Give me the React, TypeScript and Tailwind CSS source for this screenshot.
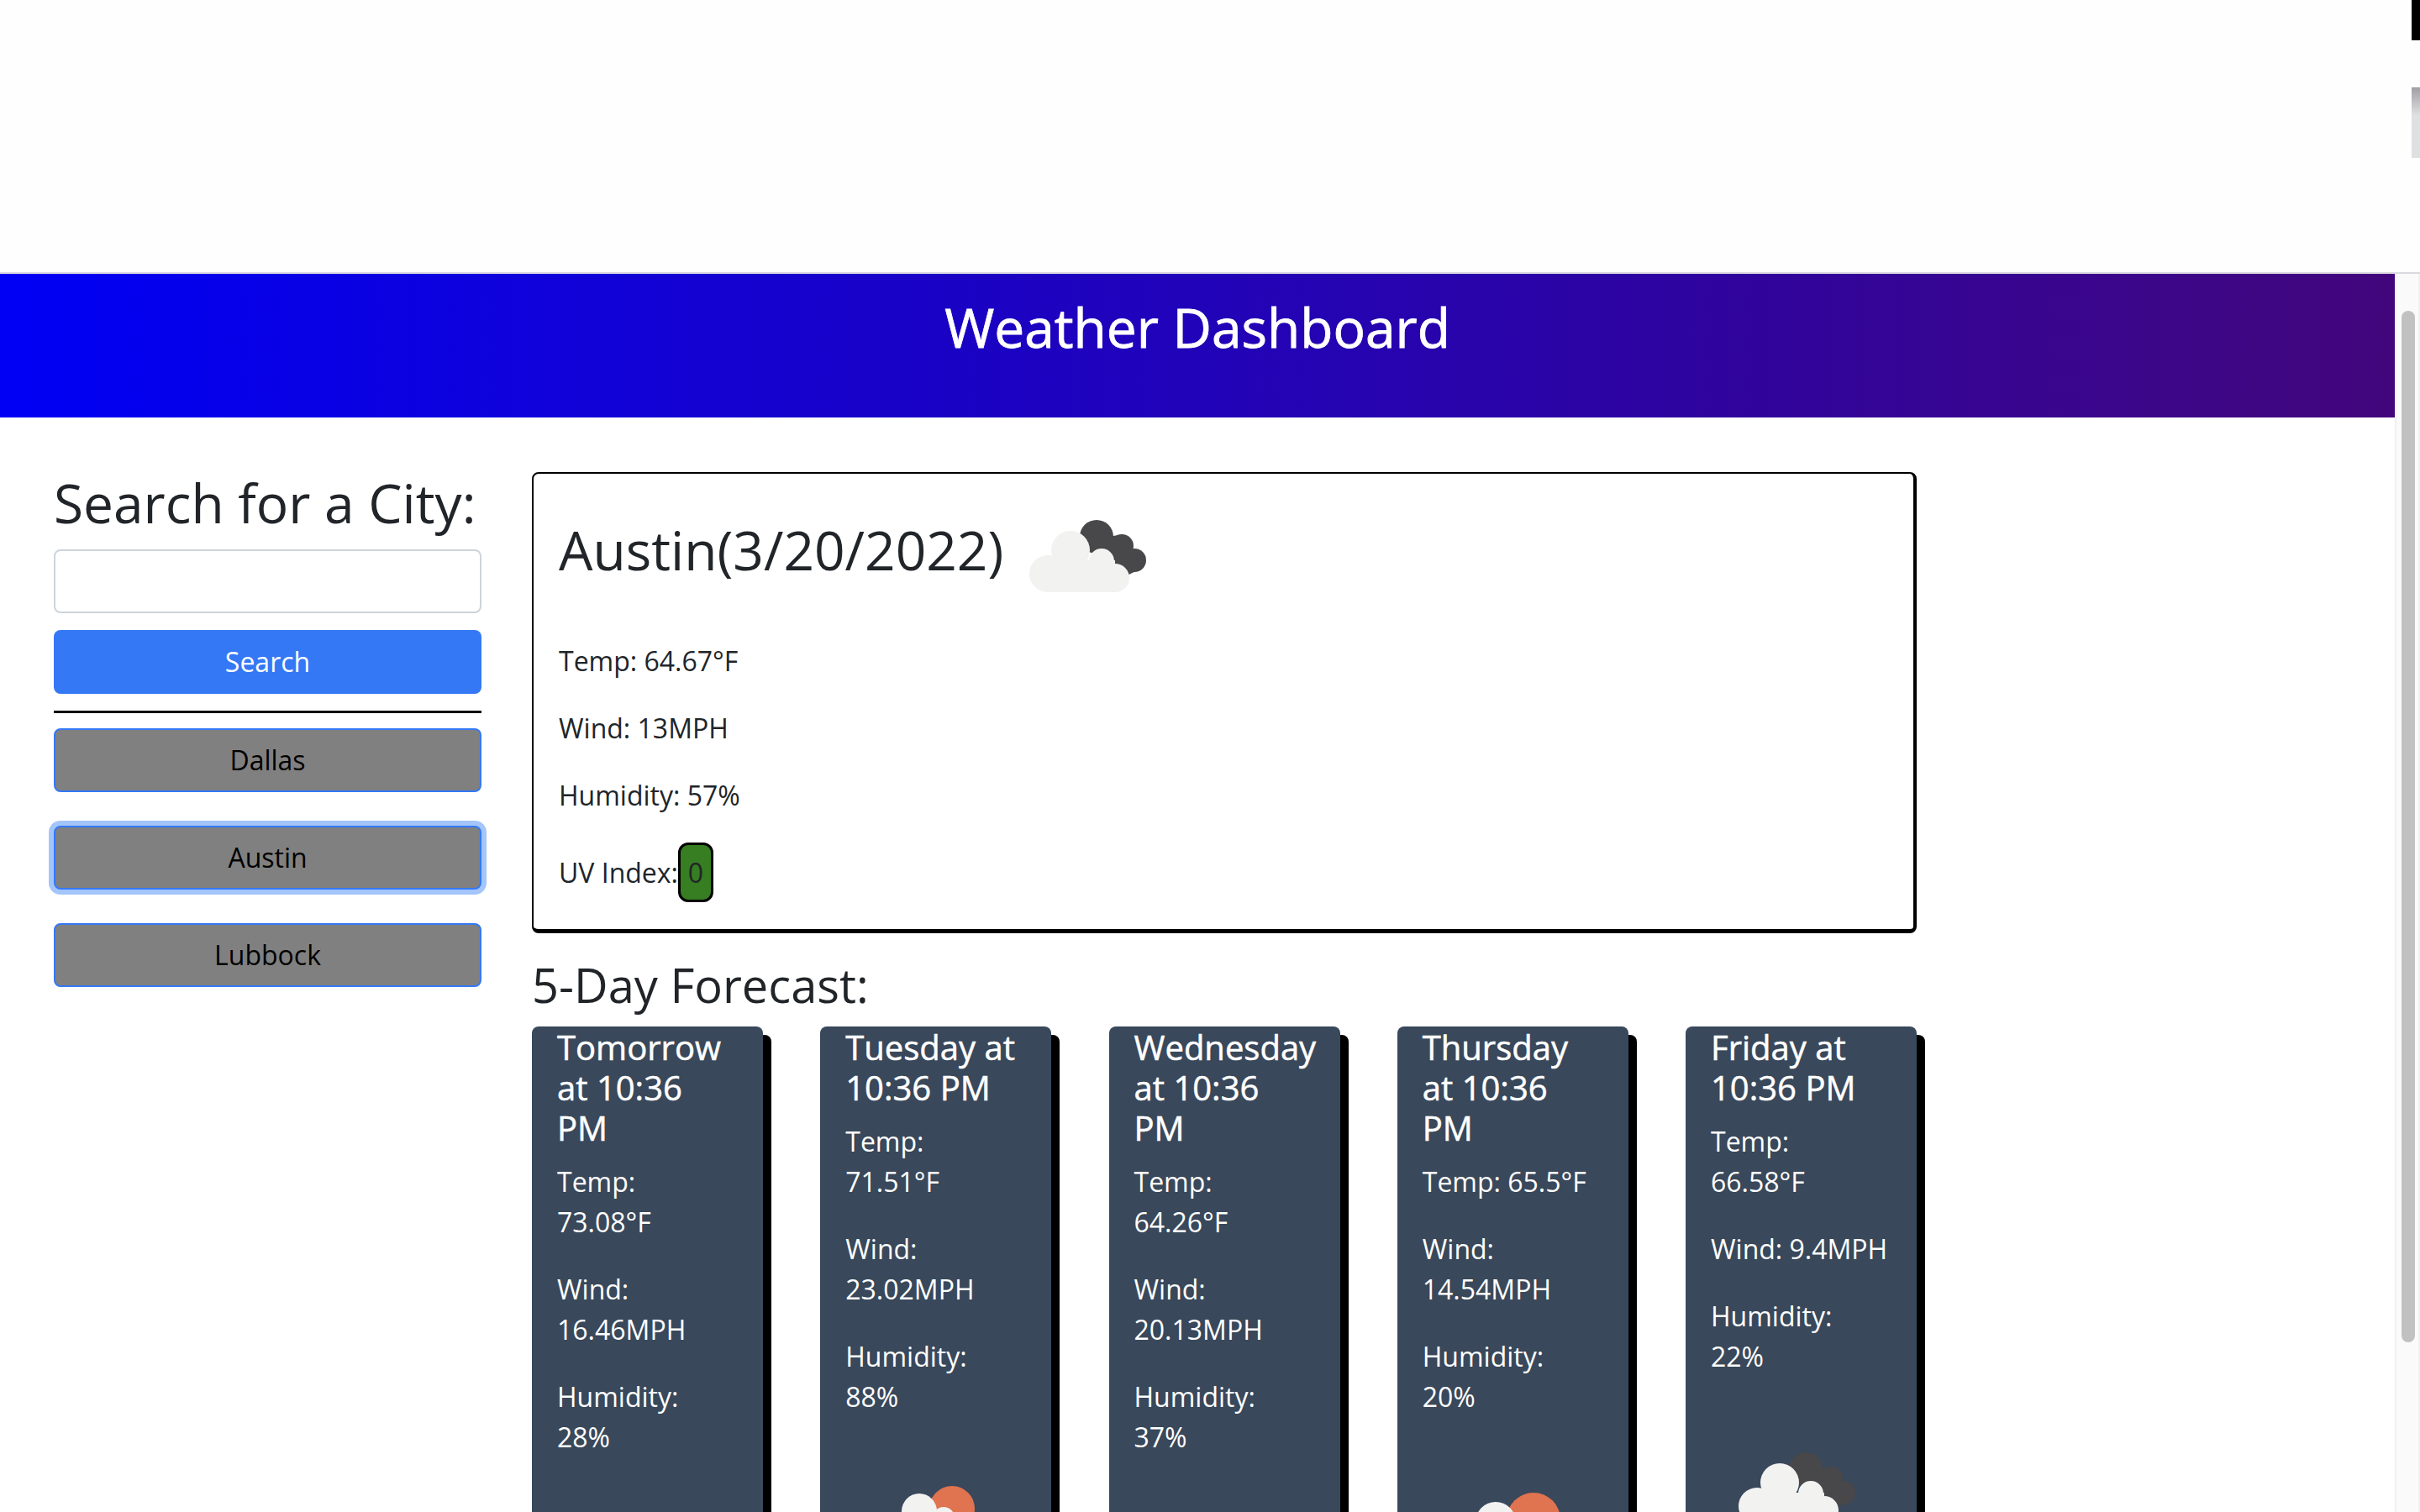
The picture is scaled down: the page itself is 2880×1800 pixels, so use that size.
import React from 'react';

const SANS = { fontFamily: '"Open Sans", "Noto Sans", sans-serif' };

type Icon = 'clouds' | 'sun' | 'sunwide';

type Day = {
  title: string;
  temp: string;
  wind: string;
  humidity: string;
  icon: Icon;
};

const days: Day[] = [
  { title: 'Tomorrow at 10:36 PM', temp: '73.08°F', wind: '16.46MPH', humidity: '28%', icon: 'sun' },
  { title: 'Tuesday at 10:36 PM', temp: '71.51°F', wind: '23.02MPH', humidity: '88%', icon: 'sun' },
  { title: 'Wednesday at 10:36 PM', temp: '64.26°F', wind: '20.13MPH', humidity: '37%', icon: 'sun' },
  { title: 'Thursday at 10:36 PM', temp: '65.5°F', wind: '14.54MPH', humidity: '20%', icon: 'sunwide' },
  { title: 'Friday at 10:36 PM', temp: '66.58°F', wind: '9.4MPH', humidity: '22%', icon: 'clouds' },
];

// drawn on the 200x200 box of the weather icon
const WeatherIcon = ({ kind }: { kind: Icon }) => (
  <svg viewBox="0 0 200 200" className="w-[200px] h-[200px] shrink-0">
    {kind === 'sun' && (
      <g fill="#f2f2f1">
        <circle cx="125" cy="77" r="27" fill="#e07350" />
        <circle cx="86" cy="80" r="21" />
        <circle cx="115" cy="88" r="13" />
        <rect x="50" y="88" width="100" height="60" rx="22" />
      </g>
    )}
    {kind === 'sunwide' && (
      <g fill="#f2f2f1">
        <circle cx="130" cy="90" r="32" fill="#e07350" />
        <circle cx="85" cy="93" r="24" />
        <rect x="40" y="104" width="115" height="50" rx="24" />
      </g>
    )}
    {kind === 'clouds' && (
      <>
        <g fill="#48484a">
          <circle cx="111" cy="78" r="20" />
          <circle cx="141" cy="89" r="14" />
          <circle cx="156" cy="106" r="14" />
          <path d="M100 80 L140 76 L166 115 L135 130 Z" />
        </g>
        <g fill="#f2f2f1">
          <circle cx="80" cy="94" r="23" />
          <circle cx="53" cy="122" r="22" />
          <circle cx="117" cy="107" r="15" />
          <circle cx="133" cy="127" r="17" />
          <rect x="53" y="106" width="80" height="38" />
        </g>
      </>
    )}
  </svg>
);

const CityButton = ({ name, focused }: { name: string; focused?: boolean }) => (
  <button
    className={`h-[76px] w-full rounded-lg border-2 border-[#3478f6] bg-[#808080] text-[32px] text-black ${
      focused ? 'ring-[6px] ring-[#a3c5fa]' : ''
    }`}
  >
    {name}
  </button>
);

const ForecastCard = ({ day }: { day: Day }) => (
  <div className="w-[275px] rounded-lg bg-[#39485a] pl-[30px] pr-[33px] text-white shadow-[10px_10px_0_#000]">
    <h5 className="text-[40px] leading-[48px] mb-4 mt-px [-webkit-text-stroke:0.5px_white]">{day.title}</h5>
    <div className="flex flex-col gap-8 text-[32px] leading-[48px]">
      <p>Temp: {day.temp}</p>
      <p>Wind: {day.wind}</p>
      <p>Humidity: {day.humidity}</p>
    </div>
    <div className="mt-8 ml-[2px] pb-10">
      <WeatherIcon kind={day.icon} />
    </div>
  </div>
);

export default function App() {
  return (
    <div className="h-[1800px] overflow-hidden bg-white text-[#212529] flex flex-col" style={SANS}>
      {/* bit of the capture above the page */}
      <div className="h-[324px] shrink-0 bg-[#fefefe] flex justify-end">
        <div className="w-[10px]">
          <div className="h-12 bg-black" />
          <div className="mt-14 h-[84px] bg-linear-to-b from-[#a0a0a4] via-[#dfe0e2] via-40% to-[#dfe0e2]" />
        </div>
      </div>

      <div className="flex flex-1 min-h-0 border-t-2 border-[#dcd8e0]">
        <div className="flex-1 min-w-0">
          <header className="h-[171px] bg-linear-to-r/srgb from-[#0000f5] to-[#42067c] text-center text-white">
            <h1 className="pt-[22px] text-[64px] leading-[84px] font-medium [-webkit-text-stroke:0.8px_white]">Weather Dashboard</h1>
          </header>

          <div className="flex pt-[63px] pl-16">
            <aside className="w-[509px] shrink-0">
              <h2 className="text-[64px] leading-[77px] mb-[17px]">Search for a City:</h2>
              <input className="block h-[76px] w-full rounded-lg border-2 border-[#ced4da] bg-white" />
              <button className="mt-5 h-[76px] w-full rounded-lg bg-[#3478f6] text-[32px] text-white">Search</button>
              <div className="mt-5 mb-[18px] h-[3px] bg-black" />
              <div className="flex flex-col gap-10">
                <CityButton name="Dallas" />
                <CityButton name="Austin" focused />
                <CityButton name="Lubbock" />
              </div>
            </aside>

            <main className="ml-[60px] w-[1648px] shrink-0">
              <section className="mt-[2px] h-[549px] rounded-lg border-2 border-black border-b-[5px] border-r-[4px] px-[30px]">
                <div className="flex h-[199px] items-start">
                  <h2 className="mt-[52px] text-[64px] leading-[77px] whitespace-nowrap">Austin(3/20/2022)</h2>
                  <div className="-mt-[3px]">
                    <WeatherIcon kind="clouds" />
                  </div>
                </div>
                <div className="flex flex-col text-[32px] leading-[48px]">
                  <p className="mb-8">Temp: 64.67°F</p>
                  <p className="mb-8">Wind: 13MPH</p>
                  <p className="mb-8">Humidity: 57%</p>
                  <p className="flex items-center h-[71px]">
                    UV Index:
                    <span className="flex h-[71px] w-[42px] items-center justify-center rounded-xl border-[3px] border-black bg-[#377d22]">0</span>
                  </p>
                </div>
              </section>

              <h3 className="mt-[28px] mb-4 text-[56px] leading-[67px]">5-Day Forecast:</h3>

              <div className="flex justify-between items-start">
                {days.map((d) => (
                  <ForecastCard key={d.title} day={d} />
                ))}
              </div>
            </main>
          </div>
        </div>

        {/* browser scrollbar */}
        <div className="w-[30px] shrink-0 bg-[#fafafa] border-l-2 border-r-2 border-[#f1f1f1] pl-[6px] pr-[2px] pt-[44px]">
          <div className="h-[1228px] w-4 rounded-full bg-[#c1c1c1]" />
        </div>
      </div>
    </div>
  );
}
